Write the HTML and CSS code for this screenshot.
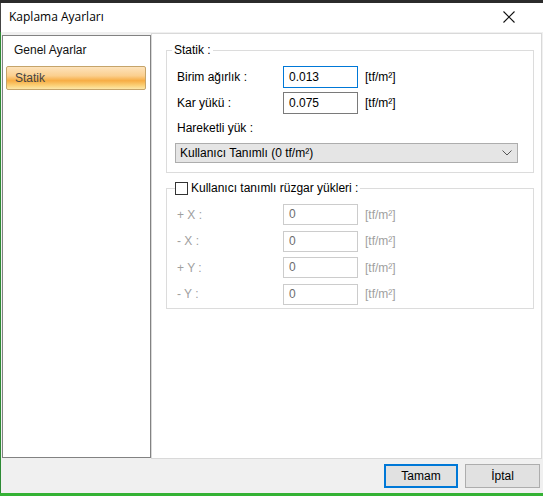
FILE: index.html
```html
<!DOCTYPE html>
<html>
<head>
<meta charset="utf-8">
<link rel="stylesheet" href="styles.css">
</head>
<body>
<div class="topstrip"></div>
<div class="window">
  <div class="titlebar">
    <span class="title">Kaplama Ayarları</span>
    <svg class="close" width="12" height="12" viewBox="0 0 12 12"><path d="M0.5 0.5 L11.5 11.5 M11.5 0.5 L0.5 11.5" stroke="#111" stroke-width="1.1" fill="none"/></svg>
  </div>
  <div class="content">
    <div class="main">
      <div class="nav">
        <div class="nav-item">Genel Ayarlar</div>
        <div class="nav-item selected">Statik</div>
      </div>
      <div class="panel">
        <div class="group g1">
          <div class="legend">Statik :</div>
          <div class="row first">
            <span class="lbl">Birim ağırlık :</span>
            <span class="input focus">0.013</span>
            <span class="unit">[tf/m²]</span>
          </div>
          <div class="row">
            <span class="lbl">Kar yükü :</span>
            <span class="input">0.075</span>
            <span class="unit">[tf/m²]</span>
          </div>
          <div class="textline">Hareketli yük :</div>
          <div class="select">
            <span>Kullanıcı Tanımlı (0 tf/m²)</span>
            <svg width="10" height="6" viewBox="0 0 10 6"><path d="M0.5 0.5 L5 5 L9.5 0.5" stroke="#555" stroke-width="1" fill="none"/></svg>
          </div>
        </div>
        <div class="group g2">
          <div class="legend chk"><span class="box"></span>Kullanıcı tanımlı rüzgar yükleri :</div>
          <div class="rows2">
            <div class="row dis">
              <span class="lbl">+ X :</span>
              <span class="input">0</span>
              <span class="unit">[tf/m²]</span>
            </div>
            <div class="row dis">
              <span class="lbl">- X :</span>
              <span class="input">0</span>
              <span class="unit">[tf/m²]</span>
            </div>
            <div class="row dis">
              <span class="lbl">+ Y :</span>
              <span class="input">0</span>
              <span class="unit">[tf/m²]</span>
            </div>
            <div class="row dis">
              <span class="lbl">- Y :</span>
              <span class="input">0</span>
              <span class="unit">[tf/m²]</span>
            </div>
          </div>
        </div>
      </div>
    </div>
    <div class="buttons">
      <div class="btn default">Tamam</div>
      <div class="btn">İptal</div>
    </div>
  </div>
  <div class="desk"></div>
</div>
</body>
</html>
```

FILE: styles.css
```css
html, body {
  margin: 0;
  padding: 0;
  width: 543px;
  height: 496px;
  overflow: hidden;
  font-family: "Liberation Sans", Arial, sans-serif;
  font-size: 12px;
  color: #000;
}
.topstrip {
  height: 3px;
  background: #2b2b2b;
}
.window {
  height: 493px;
  display: flex;
  flex-direction: column;
  background: #f0f0f0;
}
.titlebar {
  height: 29px;
  flex: none;
  background: #fff;
  display: flex;
  align-items: center;
  justify-content: space-between;
  padding: 0 28px 0 9px;
  border-left: 1px solid #444;
}
.title {
  font-family: "Open Sans", "Noto Sans", sans-serif;
  font-size: 12px;
  color: #000;
  margin-top: -2px;
  margin-left: -1px;
}
.close {
  margin-top: -2px;
}
.content {
  flex: 1;
  display: flex;
  flex-direction: column;
  border-left: 1px solid #2d8a34;
}
.main {
  display: flex;
  align-items: flex-start;
  padding-top: 1px;
}
.nav {
  margin-left: 1px;
  margin-top: 2px;
  width: 141px;
  height: 413px;
  background: #fff;
  border: 1px solid #828282;
  padding: 3px 3px 5px 3px;
  box-sizing: content-box;
}
.nav-item {
  height: 24px;
  line-height: 23px;
  padding-left: 8px;
  color: #111;
  box-sizing: border-box;
}
.nav-item.selected {
  margin-top: 3px;
  margin-right: 1px;
  border: 1px solid #c5a46a;
  border-radius: 2px;
  color: #444;
  background: linear-gradient(to bottom, #fde3bc 0%, #fbcf8e 40%, #f7ad44 62%, #fbd27a 85%, #fde7a8 100%);
}
.panel {
  margin-left: 0;
  width: 391px;
  height: 426px;
  box-sizing: border-box;
  background: #fff;
  border: 1px solid #d9d9d9;
  padding: 16px 7px 0 14px;
}
.group {
  border: 1px solid #dcdcdc;
  padding: 0 10px 0 10px;
}
.legend {
  margin-top: -8px;
  margin-left: -5px;
  padding: 0 2px;
  background: #fff;
  width: fit-content;
  line-height: 15px;
  height: 15px;
  color: #000;
}
.row {
  display: flex;
  align-items: center;
  height: 22px;
  margin-top: 4px;
}
.row.first {
  margin-top: 8px;
}
.lbl {
  width: 106px;
  flex: none;
}
.input {
  width: 75px;
  height: 22px;
  box-sizing: border-box;
  border: 1px solid #7a7a7a;
  padding-left: 5px;
  line-height: 20px;
  background: #fff;
  flex: none;
}
.input.focus {
  border-color: #0078d7;
}
.unit {
  margin-left: 7px;
}
.textline {
  margin-top: 7px;
  line-height: 15px;
  height: 15px;
}
.select {
  margin-top: 7px;
  margin-left: -2px;
  width: 343px;
  height: 20px;
  box-sizing: border-box;
  border: 1px solid #adadad;
  background: #e5e5e5;
  display: flex;
  align-items: center;
  justify-content: space-between;
  padding: 0 5px 0 4px;
}
.g1 {
  padding-bottom: 9px;
}
.g2 {
  margin-top: 15px;
  padding-bottom: 3px;
}
.chk {
  display: flex;
  align-items: center;
  margin-left: -2px;
  padding-left: 0;
}
.box {
  width: 13px;
  height: 13px;
  box-sizing: border-box;
  border: 1px solid #333;
  background: #fff;
  margin-right: 3px;
}
.rows2 {
  display: flex;
  flex-direction: column;
  gap: 5.5px;
  padding-top: 8px;
}
.row.dis {
  margin-top: 0;
  height: 21px;
}
.row.dis .lbl,
.row.dis .unit {
  color: #a0a0a0;
}
.row.dis .input {
  height: 21px;
  border-color: #cccccc;
  color: #6d6d6d;
  line-height: 19px;
}
.buttons {
  display: flex;
  justify-content: flex-end;
  gap: 7px;
  padding: 5px 3px 0 0;
}
.btn {
  height: 24px;
  box-sizing: border-box;
  border: 1px solid #adadad;
  background: #e1e1e1;
  width: 75px;
  text-align: center;
  line-height: 22px;
}
.btn.default {
  width: 74px;
  border: 2px solid #0078d7;
  line-height: 20px;
}
.desk {
  height: 3px;
  flex: none;
  background: #34b234;
}
```
